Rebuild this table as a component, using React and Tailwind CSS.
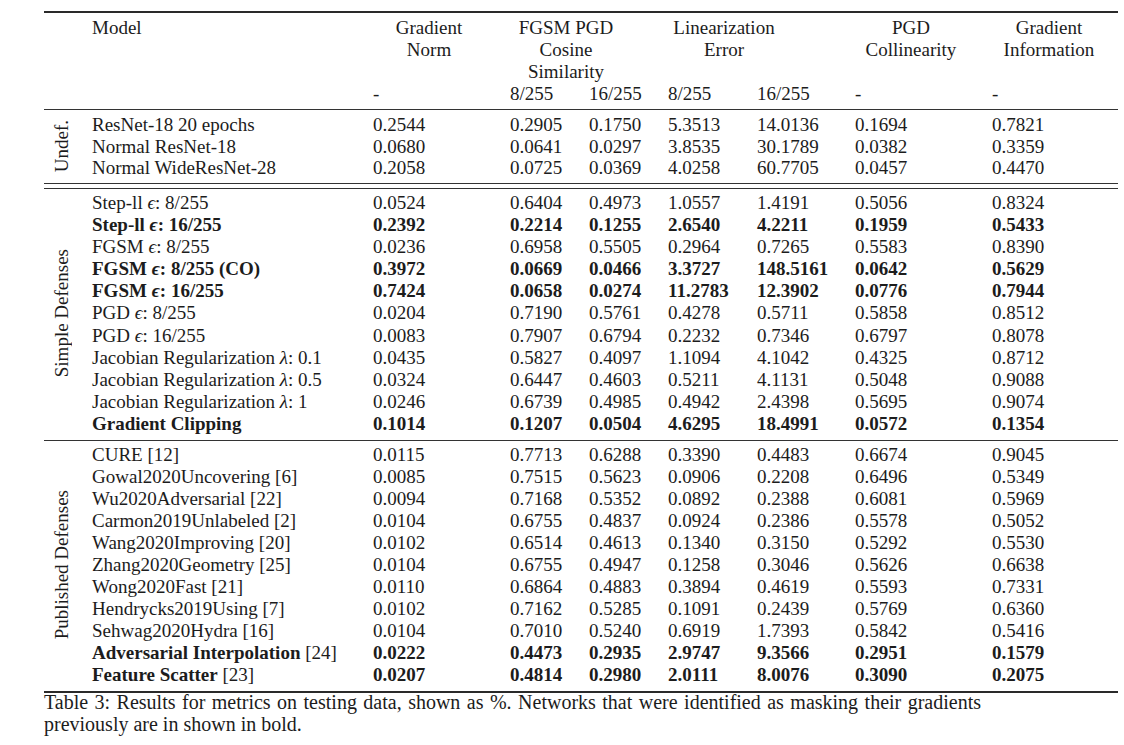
import React from 'react';

// column widths after the 48px group label column
const cols = 'grid grid-cols-[281px_137px_79px_79px_89px_98px_137px_126px]';

const eps = <i>ϵ</i>;
const lam = <i>λ</i>;

const undef = [
  { name: 'ResNet-18 20 epochs', v: ['0.2544', '0.2905', '0.1750', '5.3513', '14.0136', '0.1694', '0.7821'] },
  { name: 'Normal ResNet-18', v: ['0.0680', '0.0641', '0.0297', '3.8535', '30.1789', '0.0382', '0.3359'] },
  { name: 'Normal WideResNet-28', v: ['0.2058', '0.0725', '0.0369', '4.0258', '60.7705', '0.0457', '0.4470'] },
];

const simple = [
  { name: <>Step-ll {eps}: 8/255</>, v: ['0.0524', '0.6404', '0.4973', '1.0557', '1.4191', '0.5056', '0.8324'] },
  { name: <>Step-ll {eps}: 16/255</>, bold: true, v: ['0.2392', '0.2214', '0.1255', '2.6540', '4.2211', '0.1959', '0.5433'] },
  { name: <>FGSM {eps}: 8/255</>, v: ['0.0236', '0.6958', '0.5505', '0.2964', '0.7265', '0.5583', '0.8390'] },
  { name: <>FGSM {eps}: 8/255 (CO)</>, bold: true, v: ['0.3972', '0.0669', '0.0466', '3.3727', '148.5161', '0.0642', '0.5629'] },
  { name: <>FGSM {eps}: 16/255</>, bold: true, v: ['0.7424', '0.0658', '0.0274', '11.2783', '12.3902', '0.0776', '0.7944'] },
  { name: <>PGD {eps}: 8/255</>, v: ['0.0204', '0.7190', '0.5761', '0.4278', '0.5711', '0.5858', '0.8512'] },
  { name: <>PGD {eps}: 16/255</>, v: ['0.0083', '0.7907', '0.6794', '0.2232', '0.7346', '0.6797', '0.8078'] },
  { name: <>Jacobian Regularization {lam}: 0.1</>, v: ['0.0435', '0.5827', '0.4097', '1.1094', '4.1042', '0.4325', '0.8712'] },
  { name: <>Jacobian Regularization {lam}: 0.5</>, v: ['0.0324', '0.6447', '0.4603', '0.5211', '4.1131', '0.5048', '0.9088'] },
  { name: <>Jacobian Regularization {lam}: 1</>, v: ['0.0246', '0.6739', '0.4985', '0.4942', '2.4398', '0.5695', '0.9074'] },
  { name: 'Gradient Clipping', bold: true, v: ['0.1014', '0.1207', '0.0504', '4.6295', '18.4991', '0.0572', '0.1354'] },
];

const published = [
  { name: 'CURE [12]', v: ['0.0115', '0.7713', '0.6288', '0.3390', '0.4483', '0.6674', '0.9045'] },
  { name: 'Gowal2020Uncovering [6]', v: ['0.0085', '0.7515', '0.5623', '0.0906', '0.2208', '0.6496', '0.5349'] },
  { name: 'Wu2020Adversarial [22]', v: ['0.0094', '0.7168', '0.5352', '0.0892', '0.2388', '0.6081', '0.5969'] },
  { name: 'Carmon2019Unlabeled [2]', v: ['0.0104', '0.6755', '0.4837', '0.0924', '0.2386', '0.5578', '0.5052'] },
  { name: 'Wang2020Improving [20]', v: ['0.0102', '0.6514', '0.4613', '0.1340', '0.3150', '0.5292', '0.5530'] },
  { name: 'Zhang2020Geometry [25]', v: ['0.0104', '0.6755', '0.4947', '0.1258', '0.3046', '0.5626', '0.6638'] },
  { name: 'Wong2020Fast [21]', v: ['0.0110', '0.6864', '0.4883', '0.3894', '0.4619', '0.5593', '0.7331'] },
  { name: 'Hendrycks2019Using [7]', v: ['0.0102', '0.7162', '0.5285', '0.1091', '0.2439', '0.5769', '0.6360'] },
  { name: 'Sehwag2020Hydra [16]', v: ['0.0104', '0.7010', '0.5240', '0.6919', '1.7393', '0.5842', '0.5416'] },
  { name: <><b>Adversarial Interpolation</b> [24]</>, boldVals: true, v: ['0.0222', '0.4473', '0.2935', '2.9747', '9.3566', '0.2951', '0.1579'] },
  { name: <><b>Feature Scatter</b> [23]</>, boldVals: true, v: ['0.0207', '0.4814', '0.2980', '2.0111', '8.0076', '0.3090', '0.2075'] },
];

function Row({ r, h }) {
  return (
    <div className={`${cols} ${h} ${r.bold ? 'font-bold' : ''}`}>
      <div className="whitespace-nowrap">{r.name}</div>
      {r.v.map((x, i) => (
        <div key={i} className={r.boldVals ? 'font-bold' : ''}>{x}</div>
      ))}
    </div>
  );
}

function Section({ label, rows, h }) {
  return (
    <div className="flex">
      <div className="w-[48px] flex items-center">
        <span className="ml-[7px] [writing-mode:vertical-rl] rotate-180 whitespace-nowrap leading-[22px]">{label}</span>
      </div>
      <div>
        {rows.map((r, i) => <Row key={i} r={r} h={h} />)}
      </div>
    </div>
  );
}

export default function App() {
  return (
    <div className="w-[1124px] h-[745px] bg-white overflow-hidden font-['Liberation_Serif','Times_New_Roman',serif] text-[19px] leading-[22px] text-[#1c1c1c]">
      <div className="ml-[44px] w-[1074px] pt-[11px]">
        <div className="h-[2px] bg-[#2a2a2a]" />

        {/* header */}
        <div className="flex pt-[4px]">
          <div className="w-[48px]" />
          <div>
            <div className={`${cols} h-[66px]`}>
              <div>Model</div>
              <div className="w-[112px] text-center">Gradient<br />Norm</div>
              <div className="col-span-2 w-[112px] text-center whitespace-nowrap">FGSM PGD<br />Cosine<br />Similarity</div>
              <div className="col-span-2 w-[112px] text-center">Linearization<br />Error</div>
              <div className="w-[112px] text-center">PGD<br />Collinearity</div>
              <div className="w-[114px] text-center">Gradient<br />Information</div>
            </div>
            <div className={cols}>
              <div />
              <div>-</div>
              <div>8/255</div>
              <div>16/255</div>
              <div>8/255</div>
              <div>16/255</div>
              <div>-</div>
              <div>-</div>
            </div>
          </div>
        </div>

        <div className="mt-[4px] h-[1px] bg-[#333]" />

        <div className="pt-[4px]">
          <Section label="Undef." rows={undef} h="h-[21.5px]" />
        </div>

        <div className="mt-[4.5px] h-[1px] bg-[#333]" />
        <div className="mt-[4px] h-[1px] bg-[#333]" />

        <div className="pt-[3px]">
          <Section label="Simple Defenses" rows={simple} h="h-[22.1px]" />
        </div>

        <div className="mt-[5px] h-[1px] bg-[#333]" />

        <div className="pt-[3px]">
          <Section label="Published Defenses" rows={published} h="h-[22px]" />
        </div>

        <div className="mt-[5px] h-[2px] bg-[#2a2a2a]" />
      </div>

      <p className="ml-[44px] -mt-[2px] w-[937px] text-justify text-[20px]">
        Table 3: Results for metrics on testing data, shown as %. Networks that were identified as masking their gradients previously are in shown in bold.
      </p>
    </div>
  );
}
